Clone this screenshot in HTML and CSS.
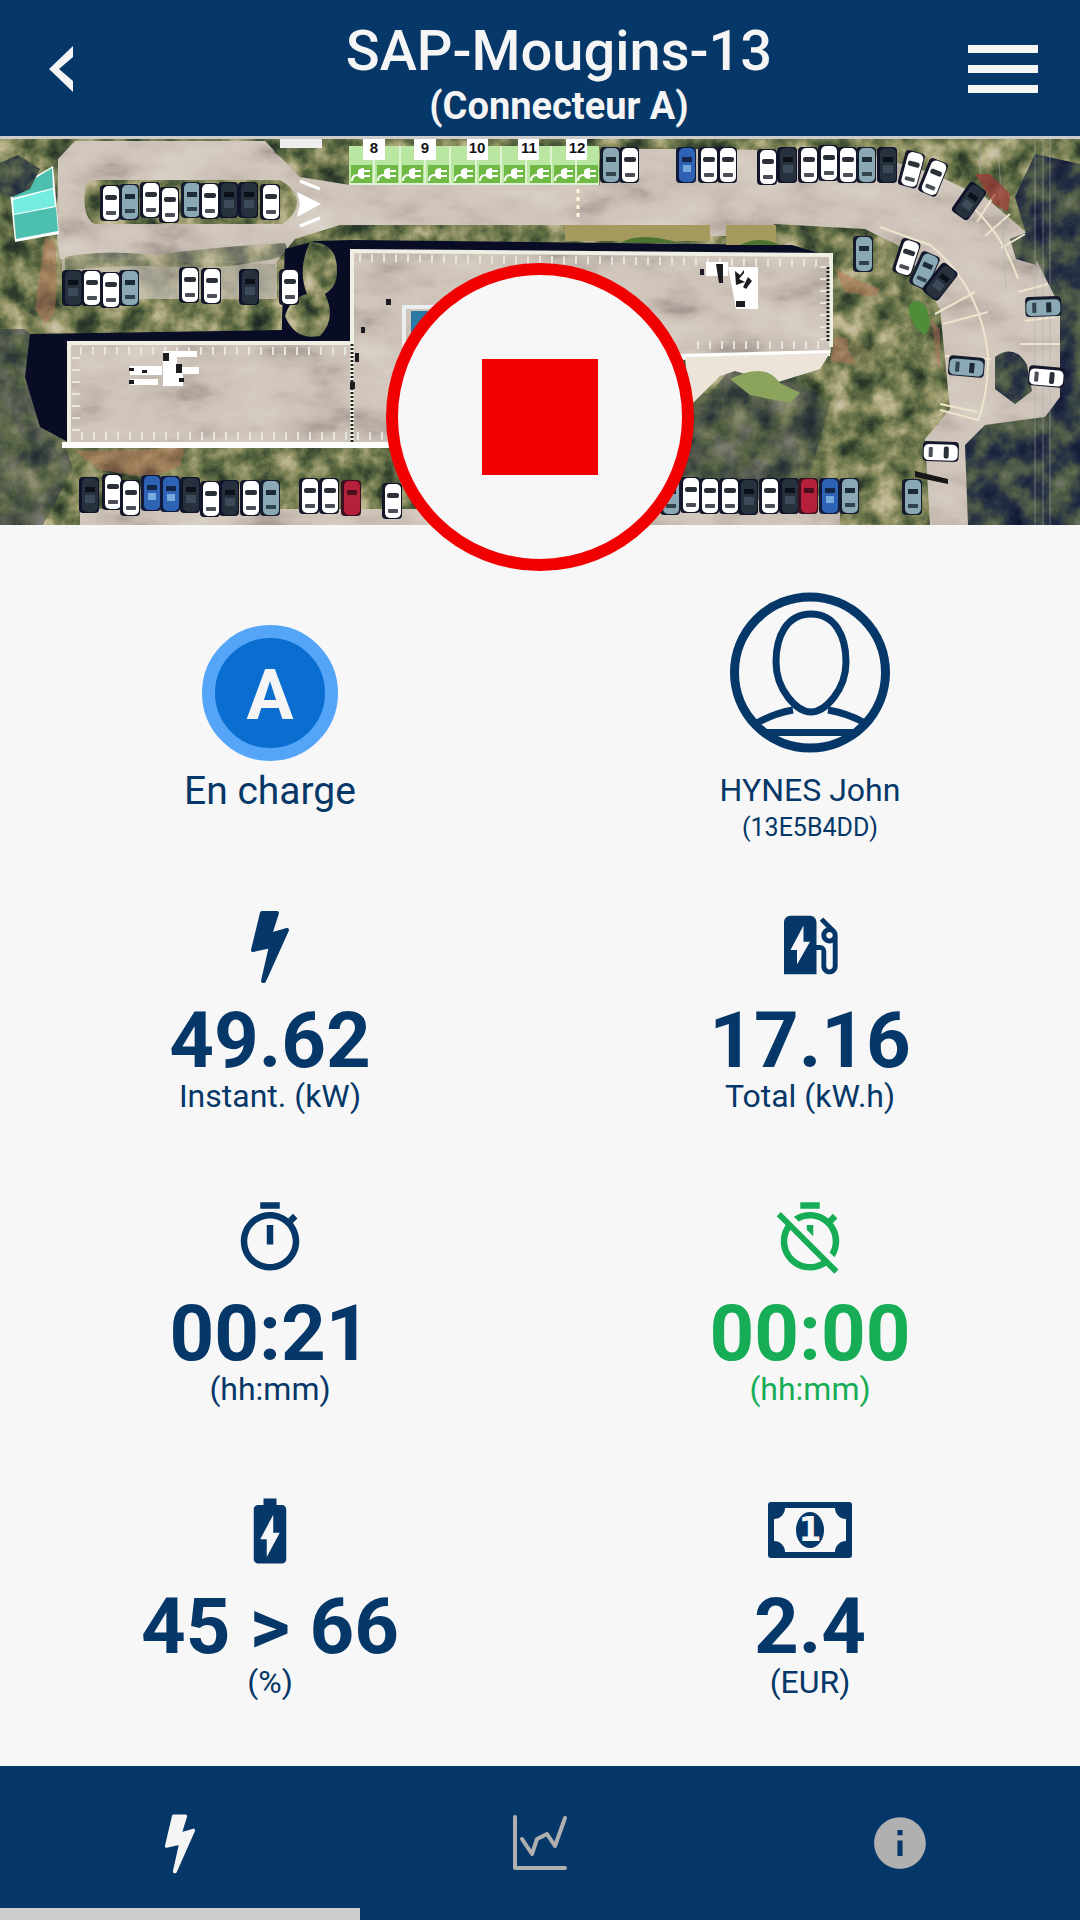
FILE: index.html
```html
<!DOCTYPE html>
<html lang="fr">
<head>
<meta charset="utf-8">
<meta name="viewport" content="width=device-width, initial-scale=1">
<title>SAP-Mougins-13</title>
<link rel="stylesheet" href="styles.css">
</head>
<body>
<div class="app">
  <header class="header">
    <button class="icon-button" type="button" aria-label="Retour">
      <svg width="24" height="46" viewBox="0 0 24 46"><path fill="#f5f5f5" d="M24 0v11L10 23l14 12v11L0 23z"/></svg>
    </button>
    <div class="heading">
      <h1 class="title">SAP-Mougins-13</h1>
      <p class="subtitle">(Connecteur A)</p>
    </div>
    <button class="icon-button" type="button" aria-label="Menu">
      <svg width="70" height="48" viewBox="0 0 70 48"><path fill="#f5f5f5" d="M0 0h70v8H0zM0 20h70v8H0zM0 40h70v8H0z"/></svg>
    </button>
  </header>

  <section class="site">
    <svg class="aerial" viewBox="0 0 1080 386" aria-hidden="true">
      <defs>
        <filter id="leaves" x="0" y="0" width="100%" height="100%" color-interpolation-filters="sRGB">
          <feTurbulence type="fractalNoise" baseFrequency=".04" numOctaves="5" seed="4"/>
          <feColorMatrix values="1 0 0 0 0  1 0 0 0 0  1 0 0 0 0  0 0 0 0 1"/>
          <feComponentTransfer>
            <feFuncR type="table" tableValues=".1 .14 .2 .32 .46 .6 .74 .8 .85"/>
            <feFuncG type="table" tableValues=".12 .18 .25 .38 .49 .6 .71 .76 .8"/>
            <feFuncB type="table" tableValues=".14 .15 .18 .24 .32 .42 .56 .66 .7"/>
          </feComponentTransfer>
          <feComposite in2="SourceGraphic" operator="in"/>
        </filter>
        <filter id="shade" x="0" y="0" width="100%" height="100%" color-interpolation-filters="sRGB">
          <feTurbulence type="fractalNoise" baseFrequency=".04" numOctaves="5" seed="9"/>
          <feColorMatrix values="1 0 0 0 0  1 0 0 0 0  1 0 0 0 0  0 0 0 0 1"/>
          <feComponentTransfer>
            <feFuncR type="table" tableValues=".04 .06 .12 .17 .27 .36 .44 .5"/>
            <feFuncG type="table" tableValues=".06 .09 .15 .21 .32 .4 .46 .5"/>
            <feFuncB type="table" tableValues=".16 .19 .25 .27 .27 .3 .4 .5"/>
          </feComponentTransfer>
          <feComposite in2="SourceGraphic" operator="in"/>
        </filter>
        <filter id="concrete" x="0" y="0" width="100%" height="100%" color-interpolation-filters="sRGB">
          <feTurbulence type="fractalNoise" baseFrequency=".014 .03" numOctaves="5" seed="12"/>
          <feColorMatrix values="1 0 0 0 0  1 0 0 0 0  1 0 0 0 0  0 0 0 0 1"/>
          <feComponentTransfer>
            <feFuncR type="table" tableValues=".55 .65 .76 .81 .83 .85 .88"/>
            <feFuncG type="table" tableValues=".52 .61 .72 .77 .79 .82 .85"/>
            <feFuncB type="table" tableValues=".5 .58 .68 .73 .75 .78 .82"/>
          </feComponentTransfer>
          <feComposite in2="SourceGraphic" operator="in"/>
        </filter>
        <g id="car"><rect x="-3" y="-1" width="20" height="36" rx="4" fill="#141629"/><rect width="16" height="34" rx="5" fill="#fff"/><rect x="2" y="9" width="12" height="5" rx="2" fill="#2b3038"/><rect x="3" y="25" width="10" height="4" rx="1" fill="#4a4f57"/></g>
        <g id="car-black"><rect x="-3" y="-1" width="20" height="36" rx="4" fill="#10142a"/><rect width="16" height="34" rx="5" fill="#27313d"/><rect x="3" y="9" width="10" height="5" fill="#0c1018"/><rect x="3" y="17" width="10" height="8" fill="#3d4b58"/></g>
        <g id="car-blue"><rect x="-3" y="-1" width="20" height="36" rx="4" fill="#101a3c"/><rect width="16" height="34" rx="5" fill="#2d62b4"/><rect x="3" y="9" width="10" height="5" fill="#122548"/><rect x="4" y="17" width="8" height="7" fill="#78a9dc"/></g>
        <g id="car-gray"><rect x="-3" y="-1" width="20" height="36" rx="4" fill="#141c2e"/><rect width="16" height="34" rx="5" fill="#8ba9b5"/><rect x="3" y="9" width="10" height="5" fill="#1c2a35"/><rect x="3" y="24" width="10" height="4" fill="#31434d"/></g>
        <g id="car-red"><rect x="-3" y="-1" width="20" height="36" rx="4" fill="#3a1020"/><rect width="16" height="34" rx="5" fill="#b5203a"/><rect x="3" y="9" width="10" height="5" fill="#4c0e1c"/></g>
        <g id="slot"><rect width="21" height="18" fill="#70b944"/><path d="M1 16q0-6 6-6" fill="none" stroke="#fff" stroke-width="2"/><path d="M7 6q1-3 6-3v11q-5 0-6-3zM13 5h6v2h-6zM13 10h6v2h-6z" fill="#fff"/></g>
      </defs>

      <rect width="1080" height="386" fill="#5d6542" filter="url(#leaves)"/>
      <path d="M0 190l25 0 20 20 18 90 10 30-30 56H0zM560 290l70-45 80 10 40-50 80 60-20 70-60 30H560z" fill="#344" filter="url(#shade)" opacity=".5"/>

      <g filter="url(#concrete)">
        <path d="M58 20L75 2h190l35 36 50 8h250V10h250l120 35 70 60 35 50-5 100-25 25-60 15-10 91h-45l-5-86 25-30-10-100-35-60-40-20-90-5-20 12h-90V86h-16v16H565V86H340l-45 14-20 25-215-5-3-20z" fill="#ccc"/>
        <path d="M80 370h760v16H80z" fill="#ccc"/>
        <path d="M62 118h215v42H62z" fill="#ccc" opacity=".7"/>
      </g>
      <path d="M85 48q0-7 10-7h185q17 10 17 22t-15 22H95q-13-5-10-37z" fill="#6a7046" filter="url(#leaves)"/>
      <path d="M65 118q40-8 90-2 60-8 130-12l5 12q-60 15-110 12-60-3-115 4z" fill="#6a7046" filter="url(#leaves)" opacity=".6"/>
      <path d="M297 53l24 12-24 13 3-13z" fill="#fff"/>
      <path d="M300 42l20 8M300 87l20-8" stroke="#fff" stroke-width="3"/>
      <path d="M270 0h80v45l-40-6-35-25z" fill="#576038" filter="url(#leaves)"/>

      <path d="M285 110l30-8 37-1 440 5 40 12v10H352v80H68v95l-28-15-15-50 5-43 252-4V180z" fill="#080d25"/>
      <path d="M310 103q28 0 27 30 0 15-12 22 12 25-5 42-25 5-35-20 5-18 22-22-10-25 3-52z" fill="#5a7a40" filter="url(#leaves)"/>
      <path d="M565 86h145v16H565zM726 86h50v20h-50z" fill="#a49a5e"/>
      <path d="M620 104q20-12 60 0zM740 106q20-10 40 0z" fill="#4d7330"/>

      <path d="M352 112l479 4v98l-150 4v90H68V204h284z" fill="#ccc" filter="url(#concrete)"/>
      <path d="M352 306V112l479 4v92M352 204H69v101h340" fill="none" stroke="#efefe4" stroke-width="4"/>
      <path d="M359 119l465 5v82H690M346 212H76v85h320" fill="none" stroke="#e6e5df" stroke-width="8" stroke-dasharray="2 10"/>
      <path d="M352 205v100M828 128v74" fill="none" stroke="#222" stroke-width="3" stroke-dasharray="2 2"/>
      <path d="M62 306h340M680 218l150-4" fill="none" stroke="#fff" stroke-width="6"/>
      <path d="M685 218l145-4-10 16-45 14-40-12-15 5-30 30z" fill="#ece4d8"/>
      <g fill="#fff"><path d="M130 227h32v9h-32zM130 240h28v6h-28zM163 212h34v6h-20v10h22v7h-16v12h-20zM706 123h22v14h-22zM728 128h30v42h-22z"/></g>
      <path d="M129 229h5v3h-5zM142 231h5v3h-5zM129 241h5v4h-5zM163 214h6v8h-6zM176 225h6v9h-6zM179 239h5v4h-5zM700 130h4v6h-4zM716 125h7v19h-4zM735 132l5 4 4-5v3l-5 6 6 3-9 3zM748 138l4 4-6 8-3-2zM736 162h9v6h-9zM386 160h5v6h-5zM361 188h4v6h-4zM355 214h4v9h-4zM350 243h5v7h-5z" fill="#1b1b20"/>
      <path d="M404 168h34v40h-34z" fill="none" stroke="#e9eef0" stroke-width="4"/>
      <path d="M411 172h30v30h-30z" fill="#2a79a6"/>

      <path d="M10 52l43-25 6 68-44 8z" fill="#fff"/>
      <path d="M13 53l39-24 1 20-40 10zM14 76l42-8 2 24-42 8z" fill="#4cbfae"/><path d="M13 61l40-11 2 17-41 8z" fill="#74ecdf"/>
      <path d="M0 24l18-8 22 14-10 20-18 8-12-4z" fill="#465" filter="url(#shade)"/>

      <g fill="#b8745a" opacity=".5"><path d="M45 98l10 5 2 35-2 35-10 12-10-15zM75 312l110-3-5 18-30 12-50-8zM835 130l25 12 20 8-5 8-30-5zM835 198l22 2 18 16-15 10-30-4zM930 180l10 10 0 40-8-10z"/></g>
      <path d="M845 160l60-5 25 15 8 60-20 30-50-10-20-40z" fill="#6c744a" filter="url(#leaves)" opacity=".8"/>
      <path d="M730 240q35-18 50 4l20 10-10 10-40-8z" fill="#8ba35c"/>
      <path d="M908 168q8-12 18 0 8 20-2 28-12-8-16-28z" fill="#4f8d38"/>

      <path d="M640 0h360v40l-25 15-50-25-60-16-225-6z" fill="#576038" filter="url(#leaves)"/>
      <path d="M1035 15l45 10v361H968l-3-80 20-20 60-8 15-20v-90l-30-60-15-50z" fill="#124" filter="url(#shade)"/>
      <path d="M1010 100l20-8 10 10-4 24-20-6zM995 218q20-14 32 8l5 26-17 13-20-15z" fill="#345" filter="url(#shade)"/>
      <path d="M880 88l50 18q50 40 58 110 0 40-10 65l-38-10M963 60q38 30 55 80" fill="none" stroke="#eee5ce" stroke-width="2"/>
      <path d="M935 175l40-22M943 185l45-12M945 217l46 3M940 265l38 8M995 55l-18 28M1010 75l-25 22M1025 95l-24 14M1048 145l-30 8M1055 178l-30 4M1060 205h-40" stroke="#eee5ce" stroke-width="2"/>
      <path d="M1035 0v386M1043 0v386M1050 0v386M998 0l8 150M980 0v40" stroke="#a8aeb8" stroke-width="1" opacity=".5"/>
      <path d="M915 332l33 8v5l-33-7z" fill="#171716"/>
      <path d="M975 35l15 0 20 20-2 18-14-8z" fill="#a23a38" opacity=".7"/>

      <rect x="349" y="7" width="250" height="38" fill="#b9e6a0"/>
      <path d="M374 7v38M400 7v38M425 7v38M450 7v38M476 7v38M501 7v38M526 7v38M551 7v38M576 7v38M349 45h250" stroke="#dff3d2" stroke-width="2"/>
      <use href="#slot" x="351" y="26"/><use href="#slot" x="377" y="26"/><use href="#slot" x="402" y="26"/><use href="#slot" x="428" y="26"/><use href="#slot" x="454" y="26"/><use href="#slot" x="479" y="26"/><use href="#slot" x="504" y="26"/><use href="#slot" x="530" y="26"/><use href="#slot" x="554" y="26"/><use href="#slot" x="577" y="26"/>
      <path d="M363 0h22v21h-22zM414 0h22v21h-22zM467 0h21v21h-21zM518 0h21v21h-21zM566 0h21v21h-21z" fill="#fff"/>
      <g class="bay-number"><text x="374" y="14">8</text><text x="425" y="14">9</text><text x="477" y="14">10</text><text x="529" y="14">11</text><text x="577" y="14">12</text></g>
      <path d="M578 50v30" stroke="#fff8dc" stroke-width="3" stroke-dasharray="4 4"/>
      <path d="M280 0h42v9h-42z" fill="#eee"/>

      <use href="#car" x="103" y="47"/><use href="#car-gray" x="122" y="46"/><use href="#car" x="143" y="44"/><use href="#car" x="162" y="49"/><use href="#car-gray" x="184" y="44"/><use href="#car" x="202" y="45"/><use href="#car-black" x="221" y="44"/><use href="#car-black" x="241" y="44"/><use href="#car" x="263" y="46"/>
      <use href="#car-black" x="65" y="132"/><use href="#car" x="84" y="132"/><use href="#car" x="103" y="134"/><use href="#car-gray" x="122" y="132"/><use href="#car" x="182" y="129"/><use href="#car" x="204" y="130"/><use href="#car-black" x="242" y="131"/><use href="#car" x="282" y="131"/>
      <use href="#car-black" x="82" y="339"/><use href="#car" x="105" y="336"/><use href="#car" x="123" y="342"/><use href="#car-blue" x="144" y="337"/><use href="#car-blue" x="163" y="338"/><use href="#car-black" x="183" y="339"/><use href="#car" x="203" y="343"/><use href="#car-black" x="222" y="342"/><use href="#car" x="243" y="342"/><use href="#car-gray" x="263" y="342"/><use href="#car" x="302" y="340"/><use href="#car" x="322" y="340"/><use href="#car-red" x="344" y="342"/><use href="#car" x="385" y="345"/>
      <use href="#car-gray" x="663" y="341"/><use href="#car" x="683" y="339"/><use href="#car" x="702" y="340"/><use href="#car" x="722" y="340"/><use href="#car-black" x="741" y="341"/><use href="#car" x="762" y="340"/><use href="#car-black" x="782" y="340"/><use href="#car-red" x="801" y="340"/><use href="#car-blue" x="822" y="340"/><use href="#car-gray" x="842" y="340"/><use href="#car-gray" x="905" y="341"/>
      <use href="#car-gray" x="603" y="9"/><use href="#car" x="622" y="9"/><use href="#car-blue" x="679" y="9"/><use href="#car" x="701" y="9"/><use href="#car" x="720" y="9"/><use href="#car" x="760" y="11"/><use href="#car-black" x="780" y="9"/><use href="#car" x="801" y="9"/><use href="#car" x="821" y="7"/><use href="#car" x="840" y="9"/><use href="#car-gray" x="859" y="9"/><use href="#car-black" x="880" y="9"/>
      <g transform="translate(909 12) rotate(15)"><use href="#car"/></g><g transform="translate(933 20) rotate(22)"><use href="#car"/></g><g transform="translate(973 44) rotate(35)"><use href="#car-black"/></g>
      <g transform="translate(905 100) rotate(18)"><use href="#car"/></g><g transform="translate(925 113) rotate(24)"><use href="#car-gray"/></g><g transform="translate(945 125) rotate(38)"><use href="#car-black"/></g><g transform="translate(856 98)"><use href="#car-gray"/></g>
      <g transform="translate(984 222) rotate(95)"><use href="#car-gray"/></g><g transform="translate(958 306) rotate(92)"><use href="#car"/></g><g transform="translate(1064 232) rotate(95)"><use href="#car"/></g><g transform="translate(1060 160) rotate(88)"><use href="#car-gray"/></g>
    </svg>
    <button class="stop" type="button" aria-label="Arrêter la charge"><span class="stop-square"></span></button>
  </section>

  <main class="main">
    <section class="status">
      <div class="connector">
        <div class="badge">A</div>
        <p class="connector-state">En charge</p>
      </div>
      <div class="user">
        <svg width="160" height="161" viewBox="0 0 160 161">
          <g fill="none" stroke="#053768">
            <circle cx="80" cy="80.500" r="75.500" stroke-width="9"/>
            <path stroke-width="7" d="M63 118Q45 121 27 131M98 118Q117 121 135 131M32 140.500h96"/>
            <path stroke-width="7" fill="#f7f7f7" d="M81 22C57 22 46 44 46 70C46 98 67 120 81 120C95 120 116 98 116 70C116 44 105 22 81 22z"/>
          </g>
        </svg>
        <p class="user-name">HYNES John</p>
        <p class="user-tag">(13E5B4DD)</p>
      </div>
    </section>

    <section class="stats">
      <div class="stat">
        <svg class="stat-icon" viewBox="0 0 78 78"><path fill="#053768" stroke="#053768" stroke-width="4" stroke-linejoin="round" d="M31 7h15L39 29 56 24 33 75H32L40 40 22 44z"/></svg>
        <p class="stat-value">49.62</p>
        <p class="stat-label">Instant. (kW)</p>
      </div>
      <div class="stat">
        <svg class="stat-icon" viewBox="0 0 24 24"><path fill="#053768" d="M19.770 7.230l.010-.010-3.720-3.720L15 4.560l2.110 2.110c-.940.360-1.610 1.260-1.610 2.330 0 1.380 1.120 2.500 2.500 2.500.360 0 .690-.080 1-.210v7.210c0 .550-.450 1-1 1s-1-.450-1-1V14c0-1.100-.900-2-2-2h-1V5c0-1.100-.900-2-2-2H6c-1.100 0-2 .900-2 2v16h10v-7.500h1.500v5c0 1.380 1.120 2.500 2.500 2.500s2.500-1.120 2.500-2.500V9c0-.690-.280-1.320-.730-1.770zM18 10c-.550 0-1-.450-1-1s.450-1 1-1 1 .450 1 1-.450 1-1 1zM8 18v-4.500H6L10 6v5h2l-4 7z"/></svg>
        <p class="stat-value">17.16</p>
        <p class="stat-label">Total (kW.h)</p>
      </div>
      <div class="stat">
        <svg class="stat-icon" viewBox="0 0 24 24"><path fill="#053768" d="M15 1H9v2h6V1zm-4 13h2V8h-2v6zm8.030-6.610l1.420-1.420c-.430-.510-.900-.990-1.410-1.410l-1.420 1.420C16.070 4.740 14.120 4 12 4c-4.970 0-9 4.030-9 9s4.020 9 9 9 9-4.030 9-9c0-2.120-.740-4.070-1.970-5.610zM12 20c-3.870 0-7-3.130-7-7s3.130-7 7-7 7 3.130 7 7-3.130 7-7 7z"/></svg>
        <p class="stat-value">00:21</p>
        <p class="stat-label">(hh:mm)</p>
      </div>
      <div class="stat stat-idle">
        <svg class="stat-icon" viewBox="0 0 24 24"><path fill="#17ad56" d="M19.040 4.550l-1.420 1.420C16.070 4.740 14.120 4 12 4c-1.830 0-3.530.550-4.950 1.480l1.460 1.460C9.530 6.350 10.730 6 12 6c3.870 0 7 3.130 7 7 0 1.270-.350 2.470-.940 3.490l1.450 1.450C20.450 16.530 21 14.830 21 13c0-2.120-.740-4.070-1.970-5.610l1.420-1.420-1.410-1.420zM15 1H9v2h6V1zm-4 8.440l2 2V8h-2v1.440zM3.020 4L1.750 5.270 4.500 8.030C3.550 9.450 3 11.160 3 13c0 4.970 4.020 9 9 9 1.840 0 3.550-.550 4.980-1.500l2.500 2.500 1.270-1.270-7.710-7.710L3.020 4zM12 20c-3.870 0-7-3.130-7-7 0-1.280.350-2.480.950-3.520l9.560 9.560c-1.030.610-2.230.960-3.510.960z"/></svg>
        <p class="stat-value">00:00</p>
        <p class="stat-label">(hh:mm)</p>
      </div>
      <div class="stat">
        <svg class="stat-icon" viewBox="0 0 24 24"><path fill="#053768" d="M15.670 4H14V2h-4v2H8.330C7.600 4 7 4.600 7 5.330v15.330C7 21.400 7.600 22 8.330 22h7.330c.740 0 1.340-.600 1.340-1.330V5.330C17 4.600 16.400 4 15.670 4zM11 20v-5.500H9L13 7v5.500h2L11 20z"/></svg>
        <p class="stat-value">45 &gt; 66</p>
        <p class="stat-label">(%)</p>
      </div>
      <div class="stat">
        <svg class="stat-icon stat-icon-wide" viewBox="0 0 84 78">
          <path fill="#053768" fill-rule="evenodd" d="M3 10h78q3 0 3 3v50q0 3-3 3H3q-3 0-3-3V13q0-3 3-3zM17 16A11 11 0 0 1 6 27v22A11 11 0 0 1 17 60h50A11 11 0 0 1 78 49V27A11 11 0 0 1 67 16z"/>
          <ellipse cx="42" cy="38" rx="14" ry="18" fill="#053768"/>
          <text class="note-digit" x="42" y="49">1</text>
        </svg>
        <p class="stat-value">2.4</p>
        <p class="stat-label">(EUR)</p>
      </div>
    </section>
  </main>

  <nav class="tabs">
    <button class="tab tab-active" type="button" aria-label="Charge">
      <svg width="62" height="62" viewBox="0 0 78 78"><path fill="#f5f5f5" stroke="#f5f5f5" stroke-width="4" stroke-linejoin="round" d="M31 5h15L39 28 56 23 33 75H32L40 39 22 43z"/></svg>
    </button>
    <button class="tab" type="button" aria-label="Graphique">
      <svg width="56" height="56" viewBox="0 0 56 56"><path fill="none" stroke="#b0b0b0" stroke-width="4" stroke-linecap="round" stroke-linejoin="round" d="M3 2v51h50M10 24l10 15 5-15 10-5 8 12L53 3"/></svg>
    </button>
    <button class="tab" type="button" aria-label="Informations">
      <svg width="62" height="62" viewBox="0 0 24 24"><path fill="#b0b0b0" d="M12 2C6.480 2 2 6.480 2 12s4.480 10 10 10 10-4.480 10-10S17.520 2 12 2zm1 15h-2v-6h2v6zm0-8h-2V7h2v2z"/></svg>
    </button>
  </nav>
</div>
</body>
</html>
```
FILE: styles.css
```css
* {
  box-sizing: border-box;
}

body {
  margin: 0;
  background: #f7f7f7;
  color: #053768;
  font-family: Roboto, "Liberation Sans", sans-serif;
}

h1,
p {
  margin: 0;
}

button {
  border: 0;
  padding: 0;
  background: none;
  cursor: pointer;
}

svg {
  display: block;
}

.app {
  display: flex;
  flex-direction: column;
  min-height: 100vh;
}

.header {
  display: grid;
  grid-template-columns: 122px 1fr 154px;
  align-items: center;
  border-bottom: 3px solid #ccc;
  background: #053768;
  color: #f5f5f5;
}

.icon-button {
  display: flex;
  align-self: stretch;
  align-items: center;
  justify-content: center;
  padding-top: 2px;
}

.heading {
  padding: 18px 0 8px 70px;
  text-align: center;
}

.title {
  font-size: 56px;
  font-weight: 500;
  line-height: 66px;
}

.subtitle {
  font-size: 38px;
  font-weight: 700;
  line-height: 44px;
}

.site {
  position: relative;
}

.aerial {
  width: 100%;
  height: auto;
}

.bay-number {
  font: 700 15px "Liberation Sans", sans-serif;
  text-anchor: middle;
  fill: #111;
}

.stop {
  position: absolute;
  bottom: -46px;
  left: 50%;
  display: flex;
  align-items: center;
  justify-content: center;
  width: 308px;
  height: 308px;
  margin-left: -154px;
  border: 12px solid #f00000;
  border-radius: 50%;
  background: #f7f7f7;
}

.stop-square {
  width: 116px;
  height: 116px;
  background: #f00000;
}

.main {
  flex: 1;
}

.status {
  display: grid;
  grid-template-columns: 1fr 1fr;
  align-items: end;
  padding: 67px 0 44px;
}

.connector,
.user,
.stat {
  display: flex;
  flex-direction: column;
  align-items: center;
}

.connector {
  padding-bottom: 28px;
}

.badge {
  display: flex;
  align-items: center;
  justify-content: center;
  width: 136px;
  height: 136px;
  padding-top: 4px;
  border: 13px solid #54a5f8;
  border-radius: 50%;
  background: #0a6ed1;
  color: #f5f5f5;
  font-size: 70px;
  font-weight: 700;
  line-height: 80px;
}

.connector-state {
  margin-top: 6px;
  font-size: 39px;
  line-height: 48px;
}

.user-name {
  margin-top: 19px;
  font-size: 32px;
  line-height: 36px;
}

.user-tag {
  margin-top: 5px;
  font-size: 25px;
  line-height: 30px;
}

.stats {
  display: grid;
  grid-template-columns: 1fr 1fr;
}

.stat {
  padding: 19px 0 66px;
}

.stat-icon {
  width: 78px;
  height: 78px;
}

.stat-icon-wide {
  width: 84px;
}

.note-digit {
  font: 700 33px "DejaVu Sans", sans-serif;
  text-anchor: middle;
  fill: #f7f7f7;
}

.stat-value {
  margin-top: 20px;
  font-size: 78px;
  font-weight: 700;
  line-height: 74px;
}

.stat-label {
  font-size: 32px;
  line-height: 36px;
}

.stat-idle {
  color: #17ad56;
}

.tabs {
  display: grid;
  grid-template-columns: repeat(3, 1fr);
  background: #053768;
}

.tab {
  display: flex;
  align-items: center;
  justify-content: center;
  padding: 46px 0 34px;
  border-bottom: 12px solid transparent;
}

.tab-active {
  border-bottom-color: #ccc;
}
```
